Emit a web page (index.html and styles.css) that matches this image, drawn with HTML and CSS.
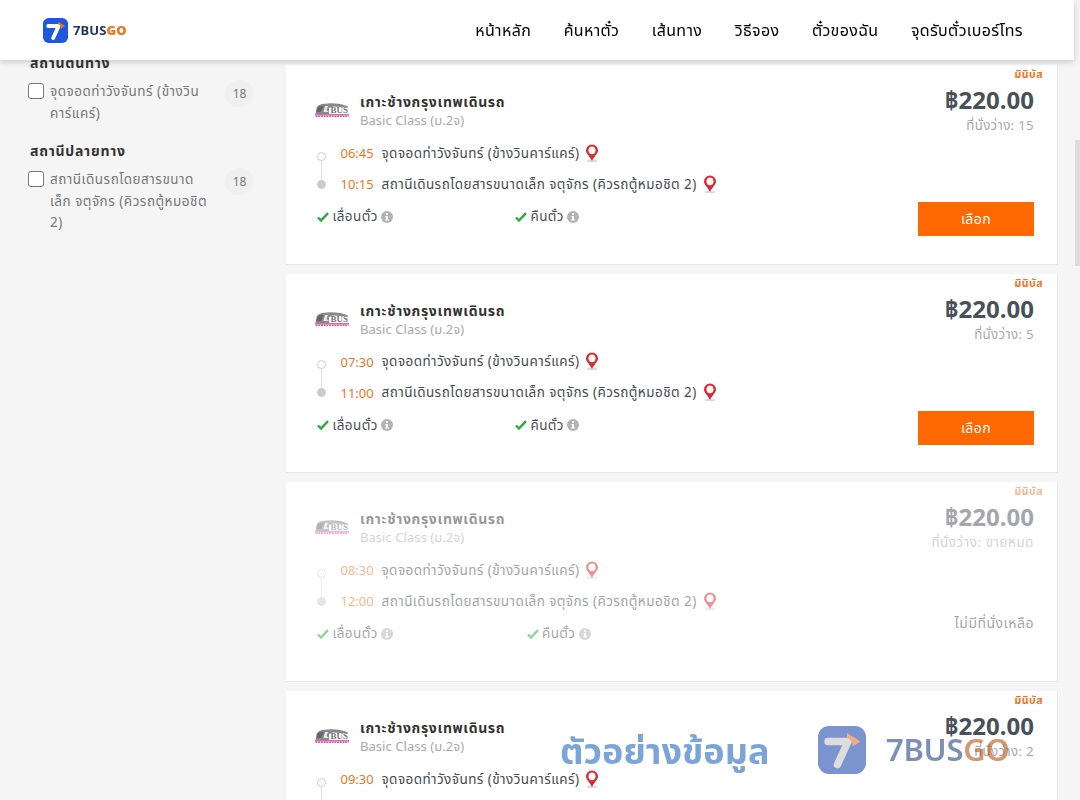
FILE: index.html
```html
<!DOCTYPE html>
<html lang="th">
<head>
<meta charset="UTF-8">
<meta name="viewport" content="width=device-width, initial-scale=1.0">
<title>7BUSGO</title>
<link rel="stylesheet" href="styles.css">
</head>
<body>

<!-- Shared icons -->
<svg class="sprite" width="0" height="0">
    <symbol id="logo7" viewBox="0 0 48 48">
        <rect class="logo-bg" width="48" height="48" rx="11"/>
        <path class="logo-seven" d="M10 15.500H30L19.500 38.500"/>
        <path d="M29 7L42.500 15.500L34.500 20.500Q35 14 29 12Z" fill="#f2711c"/>
    </symbol>
    <symbol id="pin" viewBox="0 0 14 19">
        <ellipse cx="7" cy="17" rx="5.500" ry="1.300" fill="#ddd"/>
        <path d="M7 17C5.600 13 1 9.800 1 6.400a6 6 0 0 1 12 0C13 9.800 8.400 13 7 17Z" fill="#de2630"/>
        <ellipse cx="7" cy="6.300" rx="3.500" ry="3.900" fill="#fff"/>
    </symbol>
    <symbol id="check" viewBox="0 0 12 10">
        <path d="M1 5.500L4 8.500L11 1.200" fill="none" stroke="#28a745" stroke-width="2.400"/>
    </symbol>
    <symbol id="info" viewBox="0 0 12 12">
        <circle cx="6" cy="6" r="6" fill="#b3b3b3"/>
        <path d="M5 2.200H7V4H5ZM4.500 5H7V8.200H7.800V9.500H4.300V8.200H5.100V6.200H4.500Z" fill="#fff"/>
    </symbol>
    <symbol id="bus" viewBox="0 0 34 17">
        <path d="M0.500 12L1.500 6Q2.500 3 7 2L15 1.200Q25 1 33 4.500V5.500L18 4.500L14 6V12Z" fill="#8a888c"/>
        <path d="M3 5L9 3.500L6 10H1.500Z" fill="#66646a"/>
        <path d="M8.500 10L10 4H13L11.500 8L14 10Z" fill="#e8e8e8"/>
        <text x="15.500" y="11" font-size="8" textLength="17.500" lengthAdjust="spacingAndGlyphs" class="bus-text">BUS</text>
        <path d="M0 12H34V13.500H0Z" fill="#dd6cb3"/>
        <path d="M0.500 14.200H33.500" stroke="#d65aa8" stroke-width="1.500" stroke-dasharray="2 0.700"/>
    </symbol>
</svg>

<header class="navbar">
    <a class="brand"><svg width="25" height="25"><use href="#logo7"/></svg><span>7BUS<b>GO</b></span></a>
    <nav>
        <a>หน้าหลัก</a>
        <a>ค้นหาตั๋ว</a>
        <a>เส้นทาง</a>
        <a>วิธีจอง</a>
        <a>ตั๋วของฉัน</a>
        <a>จุดรับตั๋วเบอร์โทร</a>
    </nav>
</header>

<div class="page">
    <aside class="filters">
        <h4>สถานีต้นทาง</h4>
        <label class="filter">
            <input type="checkbox">
            <span class="filter-name">จุดจอดท่าวังจันทร์ (ข้างวิน<br>คาร์แคร์)</span>
            <span class="count">18</span>
        </label>
        <h4>สถานีปลายทาง</h4>
        <label class="filter">
            <input type="checkbox">
            <span class="filter-name">สถานีเดินรถโดยสารขนาด<br>เล็ก จตุจักร (คิวรถตู้หมอชิต<br>2)</span>
            <span class="count">18</span>
        </label>
    </aside>
    <main class="trips" id="trips"></main>
</div>

<div class="watermark">
    <span class="wm-label">ตัวอย่างข้อมูล</span>
    <svg width="48" height="48"><use href="#logo7"/></svg>
    <span class="wm-brand">7BUS<b>GO</b></span>
</div>
<div class="scrollbar"></div>

<script>
    const trips = [
        { from: '06:45', to: '10:15', seats: '15' },
        { from: '07:30', to: '11:00', seats: '5' },
        { from: '08:30', to: '12:00', seats: 'ขายหมด', full: true },
        { from: '09:30', to: '13:00', seats: '2' }
    ];

    document.getElementById('trips').innerHTML = trips.map(t => `
        <section class="trip ${t.full ? 'full' : ''}">
            <div class="trip-info">
                <div class="provider">
                    <svg width="34" height="17"><use href="#bus"/></svg>
                    <div>
                        <h3>เกาะช้างกรุงเทพเดินรถ</h3>
                        <p>Basic Class (ม.2จ)</p>
                    </div>
                </div>
                <div class="route">
                    <div class="track"><i></i><i></i></div>
                    <div>
                        <div class="stop"><time>${t.from}</time><span>จุดจอดท่าวังจันทร์ (ข้างวินคาร์แคร์)</span><svg width="14" height="19"><use href="#pin"/></svg></div>
                        <div class="stop"><time>${t.to}</time><span>สถานีเดินรถโดยสารขนาดเล็ก จตุจักร (คิวรถตู้หมอชิต 2)</span><svg width="14" height="19"><use href="#pin"/></svg></div>
                    </div>
                </div>
                <div class="features">
                    <div class="feature"><svg width="12" height="10"><use href="#check"/></svg><span>เลื่อนตั๋ว</span><svg width="12" height="12"><use href="#info"/></svg></div>
                    <div class="feature"><svg width="12" height="10"><use href="#check"/></svg><span>คืนตั๋ว</span><svg width="12" height="12"><use href="#info"/></svg></div>
                </div>
            </div>
            <div class="trip-side">
                <div class="type">มินิบัส</div>
                <div class="price">฿220.00</div>
                <div class="seats">ที่นั่งว่าง: ${t.seats}</div>
                ${t.full ? '<div class="none">ไม่มีที่นั่งเหลือ</div>' : '<button>เลือก</button>'}
            </div>
        </section>`).join('');
</script>
</body>
</html>
```
FILE: styles.css
```css
* {
    box-sizing: border-box;
}

body {
    margin: 0;
    height: 800px;
    overflow: hidden;
    background: #f5f5f5;
    color: #495057;
    font-family: "Noto Sans", "Noto Sans Thai", sans-serif;
    font-size: 13px;
}

h3, h4, p {
    margin: 0;
}

svg {
    display: block;
    flex-shrink: 0;
}

.sprite {
    position: absolute;
}

.logo-bg {
    fill: var(--logo-bg, #1d59df);
}

.logo-seven {
    fill: none;
    stroke: var(--logo-seven, #fff);
    stroke-width: 7.500px;
    stroke-linecap: round;
    stroke-linejoin: round;
}

.bus-text {
    font-family: "Liberation Serif", serif;
    font-weight: bold;
    fill: #77757a;
}

/* Header */
.navbar {
    position: fixed;
    z-index: 2;
    top: 0;
    left: 0;
    width: 1074px;
    height: 60px;
    padding: 0 51px 0 43px;
    display: flex;
    align-items: center;
    justify-content: space-between;
    background: #fff;
    box-shadow: 0 2px 6px rgba(0,0,0,0.18);
}

.brand {
    display: flex;
    align-items: center;
    gap: 5px;
    color: #1e3557;
    font: bold 13px "Noto Sans", sans-serif;
}

.brand span {
    letter-spacing: 0.100px;
}

.brand b {
    color: #f27421;
}

nav {
    display: flex;
    gap: 32.500px;
    padding-top: 1px;
    color: #000;
    font-size: 16px;
    letter-spacing: 0.350px;
    white-space: nowrap;
}

/* Filters */
.page {
    display: flex;
    height: 800px;
    overflow: hidden;
}

.filters {
    width: 286px;
    flex-shrink: 0;
    padding: 52px 32px 0 28px;
}

.filters h4 {
    height: 22px;
    padding-left: 2px;
    line-height: 22px;
    color: #333;
    font-size: 14px;
    letter-spacing: 0.750px;
    white-space: nowrap;
}

.filter {
    display: flex;
    margin: 6px 0 16px;
    line-height: 21.500px;
    color: #777;
}

.filter input {
    width: 16px;
    height: 16px;
    margin: 2.500px 6px 0 0;
    appearance: none;
    border: 1.500px solid #777;
    border-radius: 3px;
    background: #fff;
}

.filter-name {
    width: 175px;
    padding-top: 1px;
    font-size: 13.500px;
    letter-spacing: 0.500px;
    white-space: nowrap;
}

.count {
    width: 29px;
    height: 27px;
    line-height: 27px;
    border-radius: 14px;
    background: #f0f0f0;
    text-align: center;
    font-size: 12px;
}

/* Trip cards */
.trips {
    width: 772px;
    padding-top: 65px;
}

.trip {
    display: flex;
    justify-content: space-between;
    height: 199.700px;
    margin-bottom: 9px;
    padding: 0 23px 0 29px;
    background: #fff;
    border: solid #e8e8e8;
    border-width: 0 1px 1px 0;
    white-space: nowrap;
}

.trip.full > div {
    opacity: 0.5;
}

.provider {
    display: flex;
    gap: 11px;
    padding-top: 27px;
}

.provider svg {
    margin-top: 10px;
}

.provider h3 {
    height: 19px;
    line-height: 19px;
    color: #333;
    font-size: 14px;
    letter-spacing: 0.640px;
}

.provider p {
    height: 18px;
    line-height: 18px;
    color: #aaa;
    letter-spacing: 0.050px;
}

.route {
    display: flex;
    gap: 13.500px;
    padding-top: 8.500px;
}

.track {
    width: 12px;
    padding: 14px 2px 0;
    display: flex;
    flex-direction: column;
    justify-content: space-between;
    height: 51px;
    background: linear-gradient(#ddd, #ddd) no-repeat 6px 20px / 1px 26px;
}

.track i {
    width: 9px;
    height: 9px;
    border-radius: 50%;
    border: 1px solid #ccc;
    background: #fff;
}

.track i:last-child {
    background: #ccc;
}

.stop {
    display: flex;
    align-items: center;
    height: 31px;
    color: #444b52;
}

.stop time {
    width: 41px;
    color: #f27421;
}

.stop span {
    padding-top: 1px;
    font-size: 13.500px;
    letter-spacing: 0.440px;
}

.stop svg {
    margin-left: 6px;
}

.features {
    display: flex;
    margin: 8px 0 0 2px;
}

.feature {
    display: flex;
    align-items: center;
    width: 198px;
    height: 18px;
    gap: 3.500px;
}

.feature span {
    padding-top: 1px;
    font-size: 13.500px;
    letter-spacing: 0.400px;
}

.full .feature:first-child {
    width: 209.500px;
}

.trip-side {
    display: flex;
    flex-direction: column;
    align-items: flex-end;
}

.type {
    height: 18px;
    margin-right: -9px;
    line-height: 19px;
    color: #f27421;
    font-size: 10.500px;
    font-weight: bold;
    letter-spacing: 0.500px;
}

.price {
    height: 34px;
    line-height: 33px;
    font-size: 24px;
    font-weight: bold;
}

.seats {
    height: 17px;
    line-height: 16px;
    color: #aaa;
    font-size: 13.300px;
    letter-spacing: 0.300px;
}

.full .seats {
    letter-spacing: 0.600px;
}

.trip button {
    width: 116px;
    height: 34px;
    margin-top: 68px;
    padding: 1px 0 0;
    border: none;
    background: #ff6700;
    color: #fff;
    font: 14px "Noto Sans", "Noto Sans Thai", sans-serif;
    letter-spacing: 0.400px;
}

.none {
    margin-top: 62px;
    line-height: 20px;
    font-size: 14px;
    letter-spacing: 0.500px;
}

/* Floating sample mark */
.watermark {
    --logo-bg: #1c45ab;
    --logo-seven: #c4c4c4;
    position: fixed;
    z-index: 3;
    left: 560px;
    top: 720px;
    height: 60px;
    display: flex;
    align-items: center;
    opacity: 0.580;
    white-space: nowrap;
}

.wm-label {
    width: 258px;
    padding-top: 5px;
    color: #1d63bd;
    font-size: 36px;
    font-weight: 700;
}

.wm-brand {
    margin: -3px 0 0 20px;
    color: #1e4080;
    font: 600 31px "Noto Sans", sans-serif;
    letter-spacing: -0.300px;
}

.wm-brand b {
    color: #b74f0e;
    font-weight: 600;
}

.scrollbar {
    position: fixed;
    right: 0;
    top: 140px;
    width: 5px;
    height: 126px;
    background: #ddd;
}
```
